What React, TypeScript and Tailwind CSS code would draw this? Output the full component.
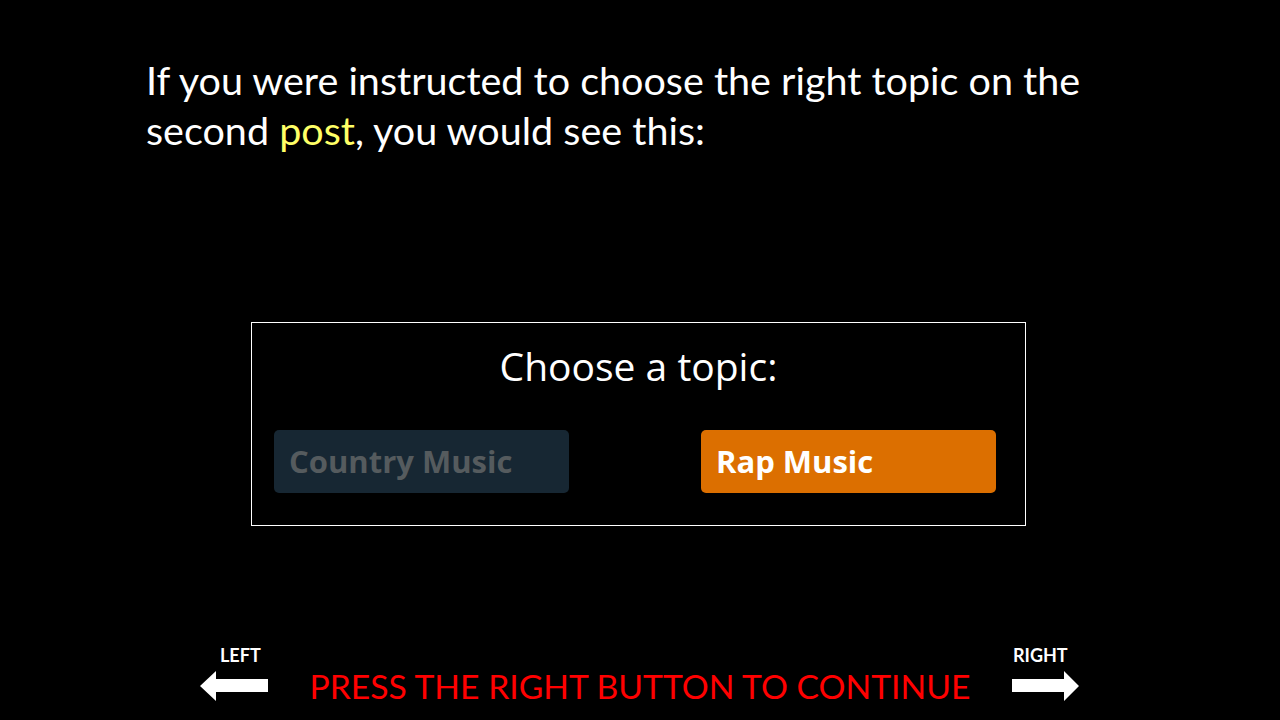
import React from "react";

function LeftArrow() {
  return (
    <svg width="68" height="30" viewBox="0 0 68 30">
      <polygon points="0,15 16,0 16,8 68,8 68,21 16,21 16,30" fill="#ffffff" />
    </svg>
  );
}

function RightArrow() {
  return (
    <svg width="67" height="30" viewBox="0 0 67 30">
      <polygon points="67,15 52,0 52,8 0,8 0,21 52,21 52,30" fill="#ffffff" />
    </svg>
  );
}

export default function App() {
  return (
    <div
      className="w-[1280px] h-[720px] bg-black flex flex-col overflow-hidden"
      style={{ fontFamily: "Lato, 'Open Sans', sans-serif" }}
    >
      <div className="pl-[146px] pt-[55px] text-white text-[39.5px] leading-[50px] whitespace-nowrap">
        <div>If you were instructed to choose the right topic on the</div>
        <div>
          second <span className="text-[#ffff66]">post</span>, you would see this:
        </div>
      </div>

      <div className="ml-[251px] mt-[167px] w-[775px] h-[204px] border border-white flex flex-col">
        <div
          className="text-white text-[39px] leading-[44px] text-center mt-[21px] whitespace-nowrap"
          style={{ fontFamily: "'Open Sans', sans-serif" }}
        >
          Choose a topic:
        </div>
        <div className="flex justify-between pl-[22px] pr-[29px] mt-[42px]">
          <div
            className="w-[295px] h-[63px] bg-[#172733] rounded-[5px] flex items-center pl-[15px] text-[#555b5e] text-[31px] font-bold whitespace-nowrap"
            style={{ fontFamily: "'Open Sans', sans-serif" }}
          >
            Country Music
          </div>
          <div
            className="w-[295px] h-[63px] bg-[#dc6f00] rounded-[5px] flex items-center pl-[15px] text-white text-[31px] font-bold whitespace-nowrap"
            style={{ fontFamily: "'Open Sans', sans-serif" }}
          >
            Rap Music
          </div>
        </div>
      </div>

      <div className="flex items-start mt-[118px] pl-[200px]">
        <div className="flex flex-col items-start w-[68px]">
          <div className="text-white text-[18px] leading-[22px] font-bold ml-[20px]">LEFT</div>
          <div className="mt-[5px]"><LeftArrow /></div>
        </div>
        <div className="text-[#ff0000] text-[33.7px] leading-[40px] ml-[41px] w-[662px] text-center whitespace-nowrap mt-[22px]">
          PRESS THE RIGHT BUTTON TO CONTINUE
        </div>
        <div className="flex flex-col items-start ml-[41px]">
          <div className="text-white text-[18px] leading-[22px] font-bold ml-[1px]">RIGHT</div>
          <div className="mt-[5px]"><RightArrow /></div>
        </div>
      </div>
    </div>
  );
}
